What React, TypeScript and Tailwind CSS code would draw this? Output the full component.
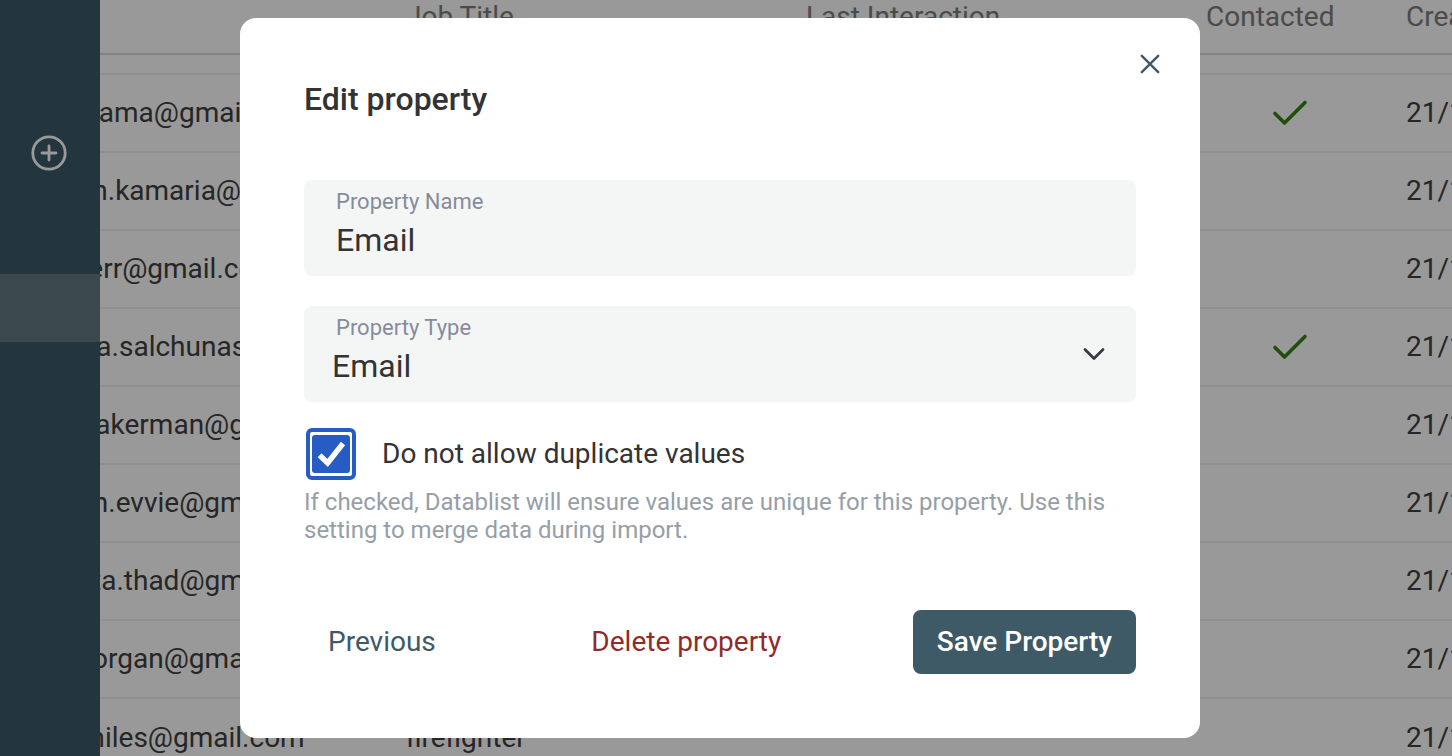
import { useState } from 'react';

interface Contact {
  email: string;
  jobTitle?: string;
  contacted?: boolean;
}

const contacts: Contact[] = [
  { email: 'osama.ama@gmail.com', contacted: true },
  { email: 'brendan.kamaria@gmail.com' },
  { email: 'erica.kerr@gmail.com' },
  { email: 'veronica.salchunas@gmail.com', contacted: true },
  { email: 'steven.akerman@gmail.com' },
  { email: 'harrison.evvie@gmail.com' },
  { email: 'henrietta.thad@gmail.com' },
  { email: 'kelly.morgan@gmail.com' },
  { email: 'david.miles@gmail.com', jobTitle: 'firefighter' },
];

const createdAt = '21/12/2021';

function Sidebar() {
  return (
    <aside className="relative z-10 w-[100px] shrink-0 bg-[#3d5a66]">
      <button type="button" aria-label="Add collection" className="mt-[135px] ml-[31px] block text-white">
        <svg width="36" height="36" viewBox="0 0 36 36" fill="none" stroke="currentColor" strokeLinecap="round">
          <circle cx="18" cy="18" r="16.2" strokeWidth="2.8" />
          <path d="M18 11v14M11 18h14" strokeWidth="2.8" />
        </svg>
      </button>
      <div className="mt-[103px] h-[68px] bg-white/20" />
    </aside>
  );
}

function ContactsTable() {
  return (
    <main className="min-w-0 flex-1 overflow-hidden bg-white">
      {/* The table is scrolled sideways, so its first column runs under the sidebar */}
      <table className="-ml-[100px] w-full min-w-[1600px] table-fixed border-collapse text-left text-[28px] leading-8 whitespace-nowrap text-[#404040]">
        <colgroup>
          <col className="w-1/4" />
          <col className="w-1/4" />
          <col className="w-1/4" />
          <col className="w-1/8" />
          <col className="w-1/8" />
        </colgroup>
        <thead>
          <tr className="h-[54px] border-b-2 border-[#dcdcdc] text-[#7d7d7d]">
            <th className="px-1.5 pb-5 font-normal">Email</th>
            <th className="px-1.5 pb-5 font-normal">Job Title</th>
            <th className="px-1.5 pb-5 font-normal">Last Interaction</th>
            <th className="px-1.5 pb-5 font-normal">Contacted</th>
            <th className="px-1.5 pb-5 font-normal">Created</th>
          </tr>
        </thead>
        <tbody>
          <tr className="h-5" />
          {contacts.map((contact) => (
            <tr key={contact.email} className="h-[78px] border-t-2 border-[#f0f0f0]">
              <td className="px-1.5">{contact.email}</td>
              <td className="px-1.5">{contact.jobTitle}</td>
              <td className="px-1.5" />
              <td className="pr-5">
                {contact.contacted && (
                  <svg
                    className="mx-auto"
                    width="36"
                    height="28"
                    viewBox="0 0 36 28"
                    fill="none"
                    stroke="#388314"
                    strokeWidth="3.6"
                    strokeLinecap="round"
                    strokeLinejoin="round"
                  >
                    <path d="M3 14.5 12.5 24 33 3.5" />
                  </svg>
                )}
              </td>
              <td className="px-1.5">{createdAt}</td>
            </tr>
          ))}
        </tbody>
      </table>
    </main>
  );
}

function EditPropertyModal() {
  const [name, setName] = useState('Email');
  const [type, setType] = useState('Email');
  const [unique, setUnique] = useState(true);

  return (
    <div className="fixed inset-0 z-20 flex items-center justify-center bg-black/40 pr-3">
      <form
        role="dialog"
        aria-labelledby="modal-title"
        className="relative w-full max-w-[960px] rounded-2xl bg-white p-16 text-[#333333]"
        onSubmit={(e) => e.preventDefault()}
      >
        <button type="button" aria-label="Close" className="absolute top-7 right-9 p-1 text-[#3d5a66]">
          <svg width="20" height="28" viewBox="0 0 20 28" fill="none" stroke="currentColor" strokeWidth="2.4" strokeLinecap="round">
            <path d="M1.8 5.8 18.2 22.2M18.2 5.8 1.8 22.2" />
          </svg>
        </button>

        <h2 id="modal-title" className="text-[32px] leading-[34px] font-medium">
          Edit property
        </h2>

        <div className="mt-16 h-24 rounded-lg bg-[#f4f6f6] px-8 pt-2">
          <label htmlFor="property-name" className="block text-[22px] leading-7 text-[#868b9c]">
            Property Name
          </label>
          <input
            id="property-name"
            type="text"
            value={name}
            onChange={(e) => setName(e.target.value)}
            className="block h-12 w-full bg-transparent text-[32px] outline-none"
          />
        </div>

        <div className="relative mt-[30px] h-24 rounded-lg bg-[#f4f6f6] px-8 pt-2">
          <label htmlFor="property-type" className="block text-[22px] leading-7 text-[#868b9c]">
            Property Type
          </label>
          <select
            id="property-type"
            value={type}
            onChange={(e) => setType(e.target.value)}
            className="-ml-1 block h-12 w-full appearance-none bg-transparent pb-1 text-[32px] outline-none"
          >
            <option>Email</option>
          </select>
          <svg
            className="pointer-events-none absolute top-10 right-[30px]"
            width="24"
            height="16"
            viewBox="0 0 24 16"
            fill="none"
            stroke="#333b44"
            strokeWidth="2.8"
            strokeLinecap="round"
            strokeLinejoin="round"
          >
            <path d="M3 3.5 12 12.5 21 3.5" />
          </svg>
        </div>

        <div className="mt-[26px] flex items-center gap-[26px] pl-0.5">
          <span className="relative flex h-[52px] w-[50px] items-center justify-center">
            <input
              id="unique-values"
              type="checkbox"
              checked={unique}
              onChange={(e) => setUnique(e.target.checked)}
              className="peer absolute inset-0 appearance-none rounded-md border-4 border-[#265cc4]"
            />
            <svg className="pointer-events-none relative hidden peer-checked:block" width="38" height="38" viewBox="0 0 38 38" fill="none">
              <rect width="38" height="38" rx="3" fill="#265cc4" />
              <path d="M7.6 20.2 15.6 28 31 8.5" stroke="#fff" strokeWidth="5.4" />
            </svg>
          </span>
          <label htmlFor="unique-values" className="text-[28px] leading-8">
            Do not allow duplicate values
          </label>
        </div>
        <p className="mt-2 text-2xl leading-7 text-[#969ea7]">
          If checked, Datablist will ensure values are unique for this property. Use this setting to merge data during
          import.
        </p>

        <div className="mt-[66px] flex items-center justify-between text-[28px] leading-8">
          <button type="button" className="h-16 px-6 text-[#3d5a66]">
            Previous
          </button>
          <button type="button" className="h-16 px-6 text-[#8f2b2b]">
            Delete property
          </button>
          <button type="submit" className="h-16 rounded-lg bg-[#3d5a66] px-6 font-medium text-white">
            Save Property
          </button>
        </div>
      </form>
    </div>
  );
}

export default function App() {
  return (
    <div className="flex h-screen overflow-hidden font-[Roboto,sans-serif]">
      <Sidebar />
      <ContactsTable />
      <EditPropertyModal />
    </div>
  );
}
